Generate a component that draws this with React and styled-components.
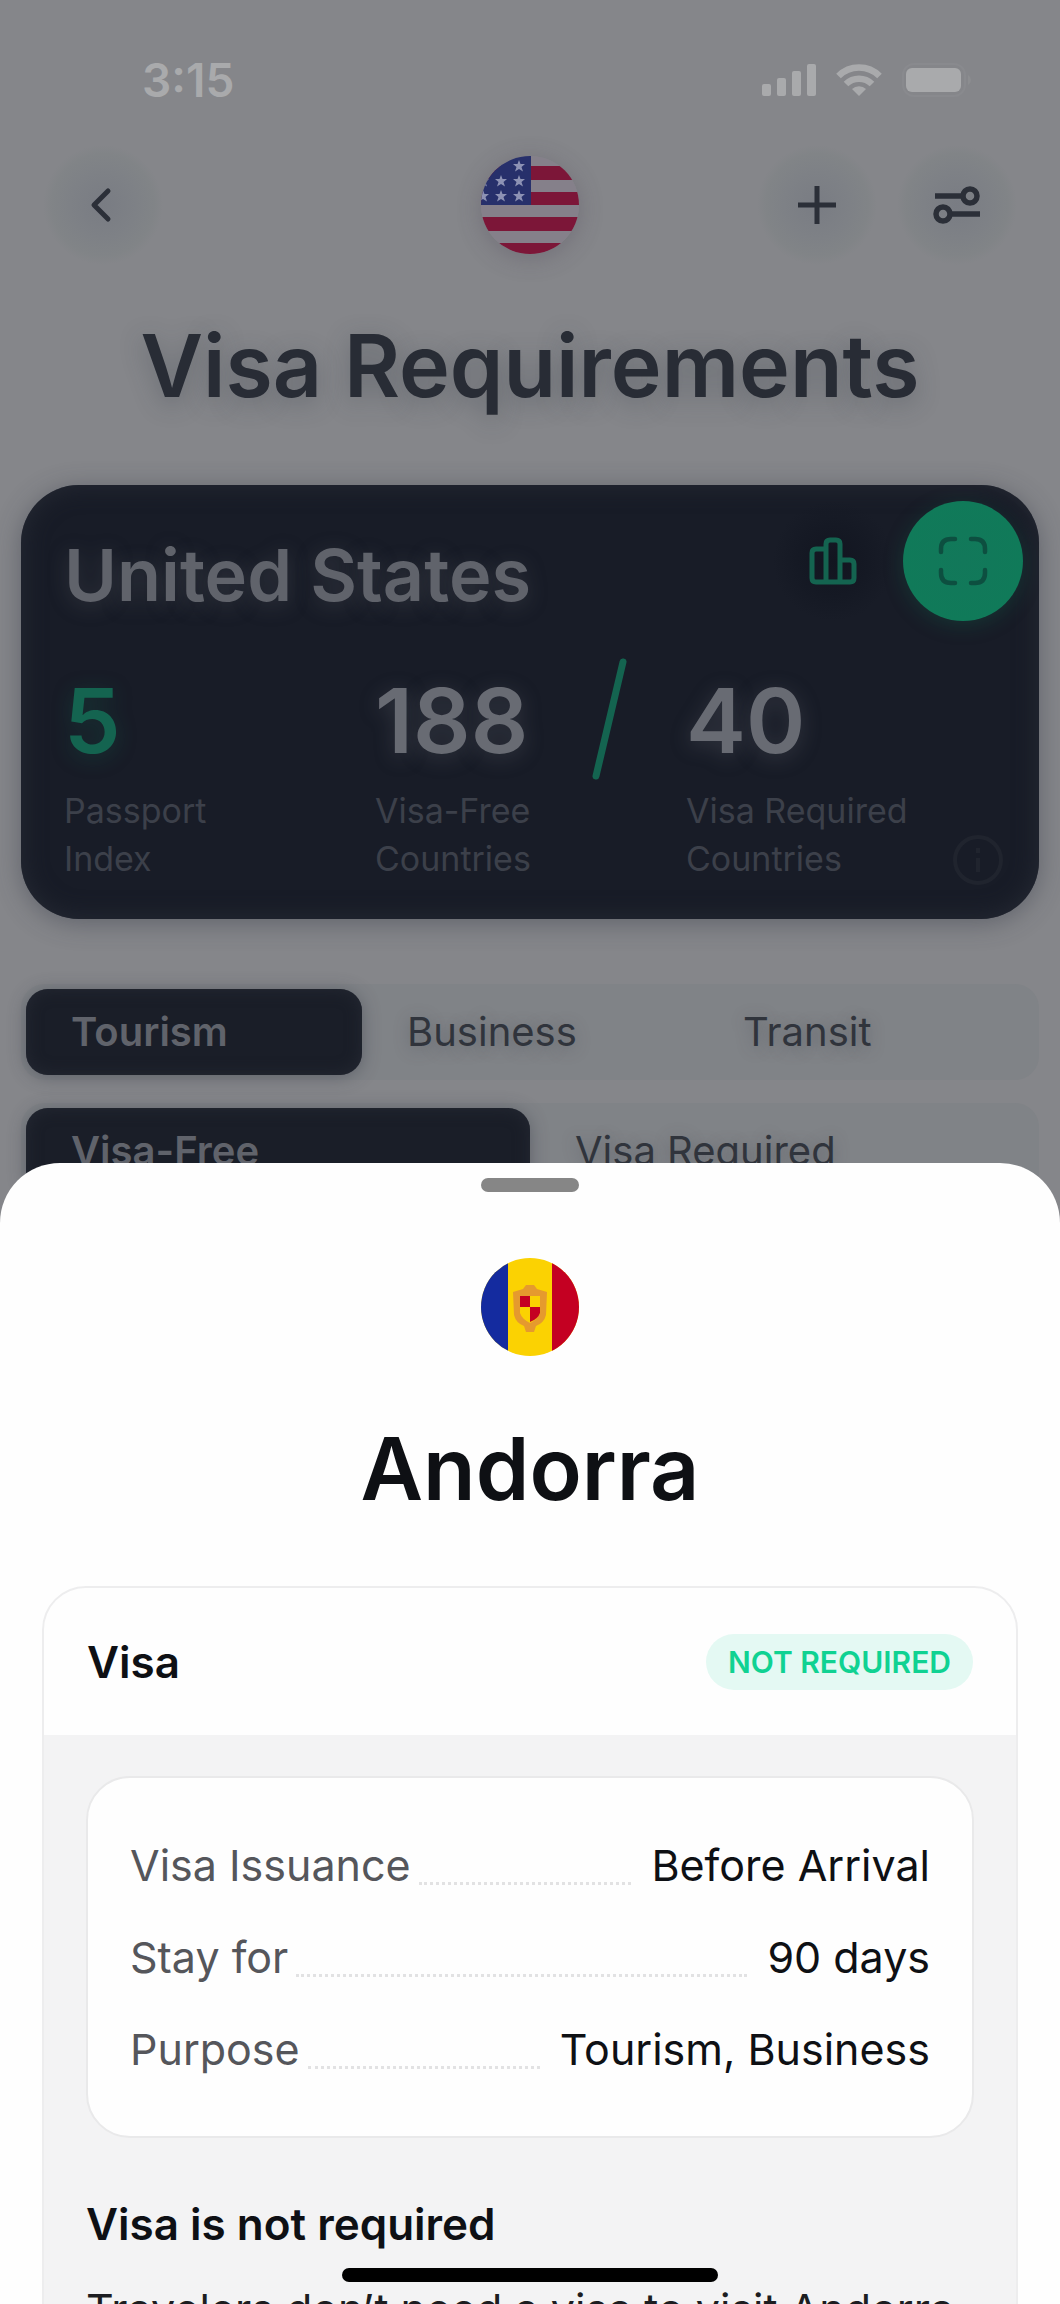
import React, { useState } from "react";
import styled, { createGlobalStyle } from "styled-components";

const GlobalStyle = createGlobalStyle`
  *, *::before, *::after { box-sizing: border-box; }
  body {
    margin: 0;
    background: #85868a;
    color: #0e1014;
    font-family: Inter, "Liberation Sans", sans-serif;
    -webkit-font-smoothing: antialiased;
  }
  button { font: inherit; border: 0; padding: 0; background: none; cursor: pointer; }
  h1, h2, h3, p, dl, dd { margin: 0; }
  svg { display: block; }
`;

const Screen = styled.div`
  position: relative;
  height: 100vh;
  min-height: 1400px;
  overflow: hidden;
`;

const Page = styled.main`
  display: flex;
  flex-direction: column;
`;

const StatusBar = styled.div`
  display: flex;
  justify-content: space-between;
  align-items: center;
  padding: 52px 88px 0 142px;
  color: #a9aaac;
`;

const Clock = styled.span`
  font-size: 46px;
  line-height: 56px;
  font-weight: 600;
`;

const StatusIcons = styled.div`
  display: flex;
  align-items: center;
  gap: 20px;
`;

const NavBar = styled.header`
  display: grid;
  grid-template-columns: 1fr auto 1fr;
  align-items: center;
  padding: 37px 43px 0;
`;

const NavGroup = styled.div`
  display: flex;
  justify-content: ${(p) => (p.$end ? "flex-end" : "flex-start")};
  gap: 20px;
`;

const NavButton = styled.button`
  display: grid;
  place-items: center;
  width: 120px;
  height: 120px;
  border-radius: 50%;
  color: #2b2f38;
  background: radial-gradient(closest-side, #797c83, #7e8186 55%, #818487 85%, #85868a);
`;

const RoundFlag = styled.svg`
  flex: none;
  width: 98px;
  height: 98px;
  border-radius: 50%;
  box-shadow: ${(p) => (p.$glow ? "0 4px 24px rgba(70, 60, 80, 0.3)" : "none")};
`;

const Title = styled.h1`
  flex: none;
  padding-top: ${(p) => (p.$dim ? 45 : 57)}px;
  text-align: center;
  font-size: 86px;
  line-height: 112px;
  font-weight: 600;
  color: ${(p) => (p.$dim ? "#282c35" : "#0e1014")};
  text-shadow: ${(p) => (p.$dim ? "0 6px 24px rgba(50, 56, 68, 0.35)" : "none")};
`;

const PassportCard = styled.section`
  display: flex;
  flex-direction: column;
  margin: 63px 21px 0;
  padding: 16px 16px 36px 43px;
  border-radius: 58px;
  color: #60636b;
  background: #181c27;
  box-shadow: inset 0 0 24px #262a34, 0 4px 26px rgba(50, 56, 68, 0.45);
`;

const CardTop = styled.div`
  display: flex;
  align-items: center;
`;

const CountryName = styled.h2`
  flex: 1;
  padding-top: 28px;
  font-size: 72px;
  line-height: 92px;
  font-weight: 600;
  text-shadow: 0 4px 20px rgba(96, 99, 107, 0.35);
`;

const CardButton = styled.button`
  display: grid;
  place-items: center;
  width: 120px;
  height: 120px;
  margin-left: 10px;
  border-radius: 50%;
  color: ${(p) => (p.$filled ? "#0d4f40" : "#146450")};
  background: ${(p) =>
    p.$filled
      ? "radial-gradient(closest-side, #12785a, #107a59)"
      : "radial-gradient(closest-side, #121520, #151924 60%, transparent)"};
  box-shadow: ${(p) => (p.$filled ? "0 4px 20px rgba(16, 122, 89, 0.25)" : "none")};
`;

const Stats = styled.div`
  position: relative;
  display: grid;
  grid-template-columns: 311px 311px 1fr;
  padding-top: 46px;
`;

const Stat = styled.div`
  display: flex;
  flex-direction: column;
`;

const StatValue = styled.strong`
  font-size: 90px;
  line-height: 108px;
  font-weight: 600;
  color: ${(p) => (p.$accent ? "#146450" : "#686b73")};
  text-shadow: 0 4px 20px ${(p) => (p.$accent ? "rgba(20, 100, 80, 0.35)" : "rgba(104, 107, 115, 0.35)")};
`;

const StatLabel = styled.span`
  padding-top: 12px;
  font-size: 34px;
  line-height: 48px;
  white-space: pre-line;
  color: #3c404a;
`;

const Slash = styled.svg`
  position: absolute;
  left: 525px;
  top: 36px;
`;

const InfoButton = styled.button`
  position: absolute;
  right: 18px;
  bottom: -4px;
  color: #20242e;
`;

const Segmented = styled.div`
  display: grid;
  grid-template-columns: repeat(${(p) => p.$count}, 1fr);
  margin: ${(p) => p.$gap}px 21px 0;
  padding: 5px;
  border-radius: 24px;
  background: #808387;
`;

const Segment = styled.button`
  height: 86px;
  padding: 0 45px;
  border-radius: 22px;
  text-align: left;
  font-size: 40px;
  line-height: 48px;
  font-weight: ${(p) => (p.$active ? 600 : 400)};
  color: ${(p) => (p.$active ? "#60636b" : "#30343c")};
  background: ${(p) => (p.$active ? "#1a1e28" : "transparent")};
  box-shadow: ${(p) =>
    p.$active ? "inset 0 0 16px #252933, 0 2px 18px rgba(50, 56, 68, 0.45)" : "none"};
  text-shadow: ${(p) => (p.$active ? "none" : "0 3px 16px rgba(60, 66, 78, 0.4)")};
`;

const Sheet = styled.section`
  position: absolute;
  inset: 1163px 0 0;
  display: flex;
  flex-direction: column;
  align-items: center;
  padding: 15px 42px 0;
  border-radius: 60px 60px 0 0;
  overflow: hidden;
  background: #fefefe;
`;

const Grabber = styled.button`
  flex: none;
  width: 98px;
  height: 14px;
  margin-bottom: 66px;
  border-radius: 7px;
  background: #868686;
`;

const VisaCard = styled.article`
  flex: none;
  align-self: stretch;
  margin-top: 61px;
  border: 2px solid #ededee;
  border-radius: 44px;
  overflow: hidden;
  background: #f3f3f4;
`;

const VisaHeader = styled.header`
  display: flex;
  justify-content: space-between;
  align-items: center;
  height: 147px;
  padding: 0 43px;
  background: #fefefe;
`;

const Heading = styled.h3`
  font-size: 44px;
  line-height: 64px;
  font-weight: 600;
`;

const Badge = styled.span`
  padding: 0 22px;
  border-radius: 28px;
  font-size: 30px;
  line-height: 56px;
  font-weight: 600;
  color: #10d292;
  background: #e4f9f3;
`;

const VisaBody = styled.div`
  display: flex;
  flex-direction: column;
  padding: 41px 42px;
`;

const Details = styled.dl`
  padding: 41px 42px;
  border: 2px solid #e9e9ea;
  border-radius: 44px;
  background: #fefefe;
`;

const DetailRow = styled.div`
  display: flex;
  align-items: center;
  height: 92px;
  font-size: 43px;
  line-height: 56px;
`;

const Term = styled.dt`
  color: #55565b;
`;

const Leader = styled.span`
  flex: 1;
  align-self: flex-end;
  margin: 0 20px 26px 8px;
  border-bottom: 3px dotted #e2e2e3;
`;

const Note = styled.div`
  display: flex;
  flex-direction: column;
  gap: 21px;
  padding-top: 54px;
`;

const NoteText = styled.p`
  font-size: 43px;
  line-height: 64px;
  color: #1c1d21;
`;

const HomeIndicator = styled.div`
  position: absolute;
  left: 50%;
  bottom: 22px;
  width: 376px;
  height: 14px;
  margin-left: -188px;
  border-radius: 7px;
  background: #000;
`;

const SignalIcon = () => (
  <svg width="54" height="32" viewBox="0 0 54 32" fill="currentColor" aria-hidden="true">
    <rect x="0" y="20" width="9" height="12" rx="2" />
    <rect x="15" y="14" width="9" height="18" rx="2" />
    <rect x="30" y="7" width="9" height="25" rx="2" />
    <rect x="45" y="0" width="9" height="32" rx="2" />
  </svg>
);

const WifiIcon = () => (
  <svg width="46" height="32" viewBox="0 0 46 32" fill="none" stroke="currentColor" strokeWidth="6.5" aria-hidden="true">
    <path d="M2.5 12a29 29 0 0 1 41 0" />
    <path d="M10 20a18.500 18.500 0 0 1 26 0" />
    <path d="M23 32l-7-7a10 10 0 0 1 14 0z" fill="currentColor" stroke="none" />
  </svg>
);

const BatteryIcon = () => (
  <svg width="70" height="34" viewBox="0 0 70 34" aria-hidden="true">
    <rect x="1" y="1" width="62" height="32" rx="11" fill="none" stroke="#898a8e" strokeWidth="2" />
    <rect x="4" y="5" width="55" height="24" rx="6" fill="currentColor" />
    <path d="M66 12v10q3-2 3-5t-3-5z" fill="#8c8d90" />
  </svg>
);

const BackIcon = () => (
  <svg width="40" height="40" viewBox="0 0 40 40" fill="none" stroke="currentColor" strokeWidth="5" strokeLinecap="round" strokeLinejoin="round" aria-hidden="true">
    <path d="M25 6L11 20l14 14" />
  </svg>
);

const PlusIcon = () => (
  <svg width="40" height="40" viewBox="0 0 40 40" fill="none" stroke="currentColor" strokeWidth="5" aria-hidden="true">
    <path d="M20 1v38M1 20h38" />
  </svg>
);

const FilterIcon = () => (
  <svg width="48" height="40" viewBox="0 0 48 40" fill="none" stroke="currentColor" strokeWidth="5.500" aria-hidden="true">
    <path d="M2 11h27M19 29h28" />
    <circle cx="37" cy="11" r="7" />
    <circle cx="10" cy="29" r="7" />
  </svg>
);

const ChartIcon = () => (
  <svg width="48" height="48" viewBox="0 0 48 48" fill="none" stroke="currentColor" strokeWidth="5" strokeLinejoin="round" aria-hidden="true">
    <path d="M17 45V7q0-4 4-4h6q4 0 4 4v38" />
    <path d="M17 12H7q-4 0-4 4v25q0 4 4 4h34q4 0 4-4V27q0-4-4-4H31" />
  </svg>
);

const ScanIcon = () => (
  <svg width="50" height="50" viewBox="0 0 50 50" fill="none" stroke="currentColor" strokeWidth="4.500" strokeLinecap="round" aria-hidden="true">
    <path d="M3 16v-3Q3 3 13 3h4M33 3h4q10 0 10 10v3M47 34v3q0 10-10 10h-4M17 47h-4Q3 47 3 37v-3" />
  </svg>
);

const InfoIcon = () => (
  <svg width="54" height="54" viewBox="0 0 54 54" fill="none" stroke="currentColor" strokeWidth="4" aria-hidden="true">
    <circle cx="27" cy="27" r="23" />
    <path d="M27 25v14M27 15v5" />
  </svg>
);

const starPoints = "0,-6 1.500,-2 6,-2 2.500,1 4,5.500 0,3 -4,5.500 -2.500,1 -6,-2 -1.500,-2";
const stars = [[38, 10], [20, 25], [38, 25], [2, 25], [20, 40], [38, 40], [2, 40]];

const FlagUnitedStates = () => (
  <RoundFlag $glow viewBox="0 0 98 98" role="img" aria-label="United States flag">
    <rect width="98" height="98" fill="#85808a" />
    <path d="M0 10h98v14H0zM0 36h98v13H0zM0 61h98v14H0zM0 87h98v11H0z" fill="#7c1638" />
    <rect width="50" height="49" fill="#27306b" />
    {stars.map(([x, y]) => (
      <polygon key={`${x}-${y}`} points={starPoints} transform={`translate(${x} ${y})`} fill="#8d92b4" />
    ))}
  </RoundFlag>
);

const FlagAndorra = () => (
  <RoundFlag viewBox="0 0 98 98" role="img" aria-label="Andorra flag">
    <rect width="98" height="98" fill="#fbd202" />
    <rect width="27" height="98" fill="#142b9f" />
    <rect x="71" width="27" height="98" fill="#c40022" />
    <path d="M32 34l10-3 3-4h8l3 4 10 3-1 23q-2 8-10 11l-2 6h-8l-2-6q-8-3-10-11z" fill="#e59a2e" />
    <path d="M39 38h20v17q-2 6-10 10-8-4-10-10z" fill="#fbd202" />
    <rect x="39" y="38" width="10" height="11" fill="#c40022" />
    <path d="M49 49h10v6q-2 6-10 9z" fill="#c40022" />
  </RoundFlag>
);

const stats = [
  { value: "5", label: "Passport\nIndex", accent: true },
  { value: "188", label: "Visa-Free\nCountries" },
  { value: "40", label: "Visa Required\nCountries" },
];

const details = [
  ["Visa Issuance", "Before Arrival"],
  ["Stay for", "90 days"],
  ["Purpose", "Tourism, Business"],
];

function Segments({ label, options, gap }) {
  const [active, setActive] = useState(options[0]);
  return (
    <Segmented role="tablist" aria-label={label} $count={options.length} $gap={gap}>
      {options.map((option) => (
        <Segment
          key={option}
          type="button"
          role="tab"
          aria-selected={option === active}
          $active={option === active}
          onClick={() => setActive(option)}
        >
          {option}
        </Segment>
      ))}
    </Segmented>
  );
}

export default function App() {
  return (
    <Screen>
      <GlobalStyle />
      <Page>
        <StatusBar>
          <Clock>3:15</Clock>
          <StatusIcons>
            <SignalIcon />
            <WifiIcon />
            <BatteryIcon />
          </StatusIcons>
        </StatusBar>
        <NavBar>
          <NavGroup>
            <NavButton type="button" aria-label="Back"><BackIcon /></NavButton>
          </NavGroup>
          <FlagUnitedStates />
          <NavGroup $end>
            <NavButton type="button" aria-label="Add"><PlusIcon /></NavButton>
            <NavButton type="button" aria-label="Filters"><FilterIcon /></NavButton>
          </NavGroup>
        </NavBar>
        <Title $dim>Visa Requirements</Title>
        <PassportCard>
          <CardTop>
            <CountryName>United States</CountryName>
            <CardButton type="button" aria-label="Ranking"><ChartIcon /></CardButton>
            <CardButton type="button" aria-label="Scan" $filled><ScanIcon /></CardButton>
          </CardTop>
          <Stats>
            {stats.map((stat) => (
              <Stat key={stat.label}>
                <StatValue $accent={stat.accent}>{stat.value}</StatValue>
                <StatLabel>{stat.label}</StatLabel>
              </Stat>
            ))}
            <Slash width="40" height="124" viewBox="0 0 40 124" aria-hidden="true">
              <path d="M34 5L7 119" stroke="#146450" strokeWidth="7" strokeLinecap="round" />
            </Slash>
            <InfoButton type="button" aria-label="Information"><InfoIcon /></InfoButton>
          </Stats>
        </PassportCard>
        <Segments label="Travel purpose" options={["Tourism", "Business", "Transit"]} gap={65} />
        <Segments label="Visa status" options={["Visa-Free", "Visa Required"]} gap={23} />
      </Page>

      <Sheet aria-label="Andorra visa details">
        <Grabber type="button" aria-label="Drag to resize" />
        <FlagAndorra />
        <Title as="h2">Andorra</Title>
        <VisaCard>
          <VisaHeader>
            <Heading>Visa</Heading>
            <Badge>NOT REQUIRED</Badge>
          </VisaHeader>
          <VisaBody>
            <Details>
              {details.map(([term, value]) => (
                <DetailRow key={term}>
                  <Term>{term}</Term>
                  <Leader aria-hidden="true" />
                  <dd>{value}</dd>
                </DetailRow>
              ))}
            </Details>
            <Note>
              <Heading>Visa is not required</Heading>
              <NoteText>Travelers don’t need a visa to visit Andorra</NoteText>
            </Note>
          </VisaBody>
        </VisaCard>
      </Sheet>
      <HomeIndicator />
    </Screen>
  );
}
